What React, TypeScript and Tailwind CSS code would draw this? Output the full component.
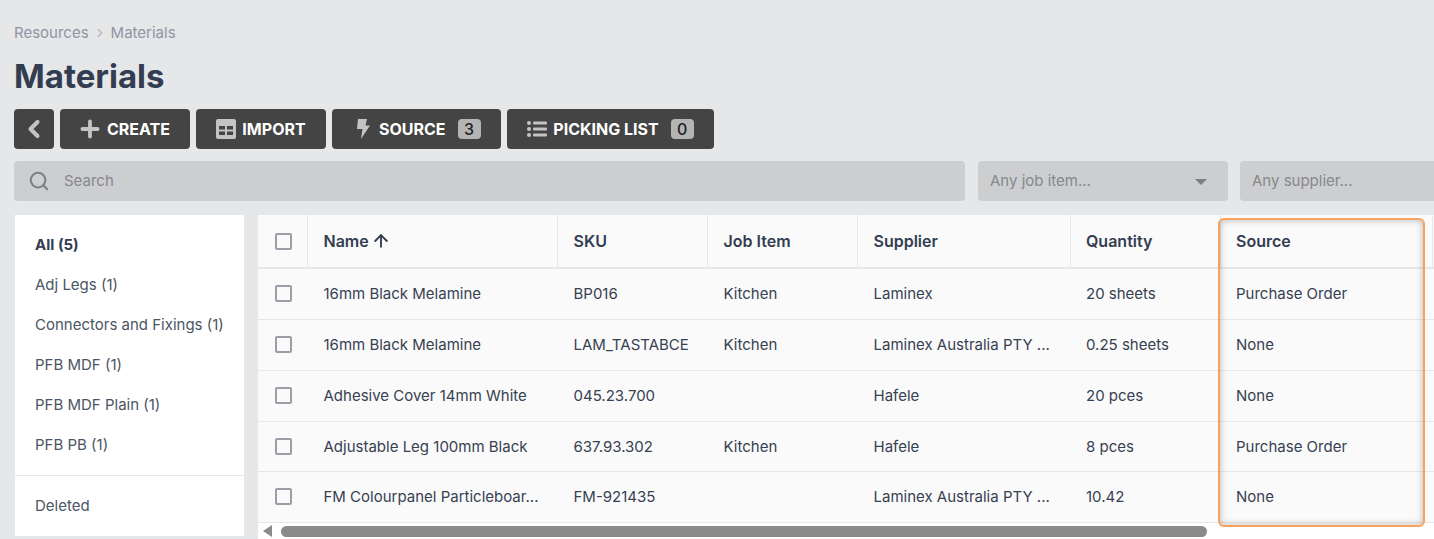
import { ChevronLeft, ChevronRight, Plus, Search, ArrowUp } from "lucide-react";

const categories = ["Adj Legs (1)", "Connectors and Fixings (1)", "PFB MDF (1)", "PFB MDF Plain (1)", "PFB PB (1)"];

const rows = [
  { name: "16mm Black Melamine", sku: "BP016", job: "Kitchen", supplier: "Laminex", qty: "20 sheets", source: "Purchase Order", h: "h-[51px]", text: "", box: "pb-[2px]" },
  { name: "16mm Black Melamine", sku: "LAM_TASTABCE", job: "Kitchen", supplier: "Laminex Australia PTY ...", qty: "0.25 sheets", source: "None", h: "h-[51px]", text: "", box: "pb-[2px]" },
  { name: "Adhesive Cover 14mm White", sku: "045.23.700", job: "", supplier: "Hafele", qty: "20 pces", source: "None", h: "h-[51px]", text: "", box: "pb-[2px]" },
  { name: "Adjustable Leg 100mm Black", sku: "637.93.302", job: "Kitchen", supplier: "Hafele", qty: "8 pces", source: "Purchase Order", h: "h-[50px]", text: "pt-[2px]", box: "" },
  { name: "FM Colourpanel Particleboar...", sku: "FM-921435", job: "", supplier: "Laminex Australia PTY ...", qty: "10.42", source: "None", h: "h-[51px]", text: "", box: "pb-[2px]" },
];

const gridCols = "grid grid-cols-[50px_250px_150px_150px_212.5px_150px_212.5px_100px]";

function Checkbox() {
  return <span className="block h-[17px] w-[17px] rounded-[2px] border-2 border-[#9a9ea6]" />;
}

function Badge({ n }: { n: number }) {
  return (
    <span className="ml-3 flex h-5 w-[23px] items-center justify-center rounded-[4px] bg-[#b4b4b4] text-[16px] font-medium text-[#222]">
      {n}
    </span>
  );
}

function ToolButton({ children, className }: { children: React.ReactNode; className: string }) {
  return (
    <button className={`flex h-10 items-center rounded-[4px] bg-[#444444] text-[16px] font-bold text-white ${className}`}>
      {children}
    </button>
  );
}

export default function App() {
  return (
    <div className="relative h-[539px] w-[1434px] overflow-hidden bg-[#e6e7e9] font-['Inter',sans-serif] text-[15px] text-[#374151]">
      {/* breadcrumb */}
      <div className="mt-[23px] flex h-[20px] items-center pl-[14px] text-[15px] text-[#8f95a1]">
        <span>Resources</span>
        <ChevronRight className="mx-[4px] h-[14px] w-[14px] text-[#b6bac1]" strokeWidth={2.5} />
        <span>Materials</span>
      </div>

      <h1 className="mt-[13px] pl-[14px] text-[33px] leading-[40px] font-bold text-[#333d51]">Materials</h1>

      {/* toolbar */}
      <div className="mt-[13px] flex gap-[6px] pl-[14px]">
        <ToolButton className="w-10 justify-center">
          <ChevronLeft className="h-[28px] w-[28px] text-[#c4c4c4]" strokeWidth={3.5} />
        </ToolButton>
        <ToolButton className="w-[130px] pl-[17px]">
          <Plus className="mr-[4px] h-[26px] w-[26px] text-[#c4c4c4]" strokeWidth={3.5} />
          CREATE
        </ToolButton>
        <ToolButton className="w-[130px] justify-center">
          <svg className="mr-[6px] h-[20px] w-[20px] text-[#c4c4c4]" viewBox="0 0 20 20" fill="currentColor">
            <path fillRule="evenodd" d="M2 0h16a2 2 0 0 1 2 2v16a2 2 0 0 1-2 2H2a2 2 0 0 1-2-2V2a2 2 0 0 1 2-2Zm1 7v3.500h6V7H3Zm8 0v3.500h6V7h-6Zm-8 5.500V16h6v-3.500H3Zm8 0V16h6v-3.500h-6Z" />
          </svg>
          IMPORT
        </ToolButton>
        <ToolButton className="w-[169px] pl-[24px]">
          <svg className="mr-[9px] h-[20px] w-[14px] text-[#c4c4c4]" viewBox="0 0 14 20" fill="currentColor">
            <path d="M2 0h9L9.500 6.500H14L5 20l1.500-10H1L2 0Z" />
          </svg>
          SOURCE
          <Badge n={3} />
        </ToolButton>
        <ToolButton className="w-[207px] justify-center">
          <svg className="mr-[6px] h-[18px] w-[20px] text-[#c4c4c4]" viewBox="0 0 20 18" fill="currentColor">
            <circle cx="2" cy="3" r="2" />
            <circle cx="2" cy="9" r="2" />
            <circle cx="2" cy="15" r="2" />
            <rect x="6" y="1.500" width="14" height="3" rx="1" />
            <rect x="6" y="7.500" width="14" height="3" rx="1" />
            <rect x="6" y="13.500" width="14" height="3" rx="1" />
          </svg>
          PICKING LIST
          <Badge n={0} />
        </ToolButton>
      </div>

      {/* filters */}
      <div className="mt-3 flex pl-[14px] text-[15px] text-[#85888d]">
        <div className="flex h-10 w-[951px] shrink-0 items-center rounded-[4px] bg-[#cdced0] pl-[14px]">
          <Search className="h-[22px] w-[22px] text-[#7c7f84]" strokeWidth={2.25} />
          <span className="ml-[14px]">Search</span>
        </div>
        <div className="ml-[13px] flex h-10 w-[250px] shrink-0 items-center justify-between rounded-[4px] bg-[#cdced0] pr-[21px] pl-3">
          <span>Any job item...</span>
          <span className="mt-[2px] h-0 w-0 border-x-[6px] border-t-[6px] border-x-transparent border-t-[#7c7f84]" />
        </div>
        <div className="ml-3 flex h-10 w-[300px] shrink-0 items-center rounded-[4px] bg-[#cdced0] pl-3">
          <span>Any supplier...</span>
        </div>
      </div>

      <div className="mt-[14px] flex items-start pl-[15px]">
        {/* sidebar */}
        <aside className="h-[321px] w-[229px] shrink-0 bg-white">
          <div className="flex h-[50px] items-center pt-[10px] pl-5 font-bold text-[#333d51]">All (5)</div>
          <div className="border-b border-[#e6e7e9] pb-[10px]">
            {categories.map((c) => (
              <div key={c} className="flex h-10 items-center pl-5 text-[#4b5563]">
                {c}
              </div>
            ))}
          </div>
          <div className="flex h-[60px] items-center pl-5 text-[#4b5563]">Deleted</div>
        </aside>

        {/* table */}
        <div className="ml-[14px] w-[1176px] shrink-0">
          <div className={`${gridCols} h-[54px] border-b-2 border-[#e6e7e9] bg-[#fafafa] text-[16px] font-semibold text-[#333d51]`}>
            <div className="flex items-center border-r border-[#e8e8e8] pl-[17px]">
              <Checkbox />
            </div>
            <div className="flex items-center border-r border-[#e8e8e8] pl-[15.5px]">
              Name
              <ArrowUp className="ml-[2px] h-[20px] w-[20px]" strokeWidth={2.25} />
            </div>
            <div className="flex items-center border-r border-[#e8e8e8] pl-[15.5px]">SKU</div>
            <div className="flex items-center border-r border-[#e8e8e8] pl-[15.5px]">Job Item</div>
            <div className="flex items-center border-r border-[#e8e8e8] pl-[15.5px]">Supplier</div>
            <div className="flex items-center border-r border-[#e8e8e8] pl-[15.5px]">Quantity</div>
            <div className="flex items-center border-r border-[#e8e8e8] pl-[15.5px]">Source</div>
            <div />
          </div>
          {rows.map((r, i) => (
            <div key={i} className={`${gridCols} ${r.h} items-center border-b border-[#e6e7e9] bg-[#fafafa]`}>
              <div className={`pl-[17px] ${r.box}`}>
                <Checkbox />
              </div>
              <div className={`pl-[15.5px] ${r.text}`}>{r.name}</div>
              <div className={`pl-[15.5px] ${r.text}`}>{r.sku}</div>
              <div className={`pl-[15.5px] ${r.text}`}>{r.job}</div>
              <div className={`pl-[15.5px] ${r.text}`}>{r.supplier}</div>
              <div className={`pl-[15.5px] ${r.text}`}>{r.qty}</div>
              <div className={`pl-[15.5px] ${r.text}`}>{r.source}</div>
              <div />
            </div>
          ))}
          {/* scrollbar */}
          <div className="flex h-[16px] items-center bg-white pl-[5px]">
            <span className="h-0 w-0 border-y-[6px] border-r-[9px] border-y-transparent border-r-[#8a8a8a]" />
            <span className="ml-[9px] h-[11px] w-[926px] rounded-full bg-[#8a8a8a]" />
          </div>
        </div>
      </div>

      {/* highlight over the source column */}
      <div className="pointer-events-none absolute top-[218px] left-[1218px] h-[309px] w-[207px] rounded-[6px] border-2 border-[#f7a25f] shadow-[inset_0_0_7px_rgba(0,0,0,0.28)]" />
    </div>
  );
}
